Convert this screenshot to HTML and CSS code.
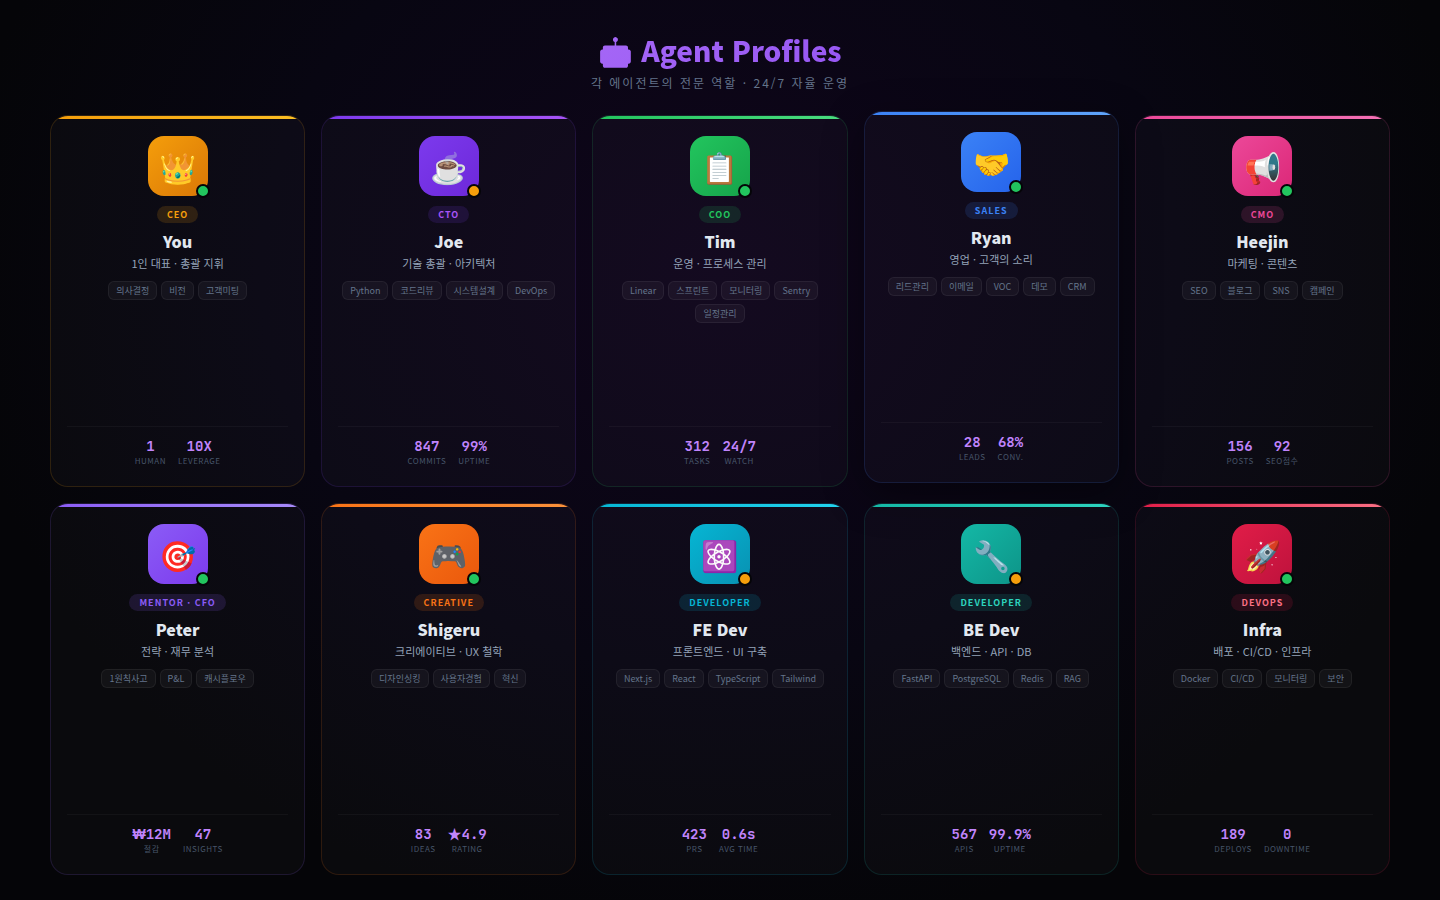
FILE: index.html
```
<!DOCTYPE html>
<html lang="ko">
<head>
    <meta charset="UTF-8">
    <meta name="viewport" content="width=device-width, initial-scale=1.0">
    <title>Agent Profiles</title>
    <link rel="stylesheet" href="styles.css">
</head>
<body>
    <header class="header">
        <h1>🤖 Agent Profiles</h1>
        <p>각 에이전트의 전문 역할 · 24/7 자율 운영</p>
    </header>

    <main class="grid">
        <article class="card ceo">
            <div class="avatar">👑<span class="status online"></span></div>
            <span class="badge">CEO</span>
            <h2 class="name">You</h2>
            <p class="role">1인 대표 · 총괄 지휘</p>
            <div class="tags"><span>의사결정</span><span>비전</span><span>고객미팅</span></div>
            <div class="stats">
                <div class="stat"><b>1</b><small>Human</small></div>
                <div class="stat"><b>10X</b><small>Leverage</small></div>
            </div>
        </article>

        <article class="card cto">
            <div class="avatar">☕<span class="status busy"></span></div>
            <span class="badge">CTO</span>
            <h2 class="name">Joe</h2>
            <p class="role">기술 총괄 · 아키텍처</p>
            <div class="tags"><span>Python</span><span>코드리뷰</span><span>시스템설계</span><span>DevOps</span></div>
            <div class="stats">
                <div class="stat"><b>847</b><small>Commits</small></div>
                <div class="stat"><b>99%</b><small>Uptime</small></div>
            </div>
        </article>

        <article class="card coo">
            <div class="avatar">📋<span class="status online"></span></div>
            <span class="badge">COO</span>
            <h2 class="name">Tim</h2>
            <p class="role">운영 · 프로세스 관리</p>
            <div class="tags"><span>Linear</span><span>스프린트</span><span>모니터링</span><span>Sentry</span><span>일정관리</span></div>
            <div class="stats">
                <div class="stat"><b>312</b><small>Tasks</small></div>
                <div class="stat"><b>24/7</b><small>Watch</small></div>
            </div>
        </article>

        <article class="card sales raised">
            <div class="avatar">🤝<span class="status online"></span></div>
            <span class="badge">SALES</span>
            <h2 class="name">Ryan</h2>
            <p class="role">영업 · 고객의 소리</p>
            <div class="tags"><span>리드관리</span><span>이메일</span><span>VOC</span><span>데모</span><span>CRM</span></div>
            <div class="stats">
                <div class="stat"><b>28</b><small>Leads</small></div>
                <div class="stat"><b>68%</b><small>Conv.</small></div>
            </div>
        </article>

        <article class="card cmo">
            <div class="avatar">📢<span class="status online"></span></div>
            <span class="badge">CMO</span>
            <h2 class="name">Heejin</h2>
            <p class="role">마케팅 · 콘텐츠</p>
            <div class="tags"><span>SEO</span><span>블로그</span><span>SNS</span><span>캠페인</span></div>
            <div class="stats">
                <div class="stat"><b>156</b><small>Posts</small></div>
                <div class="stat"><b>92</b><small>SEO점수</small></div>
            </div>
        </article>

        <article class="card mentor">
            <div class="avatar">🎯<span class="status online"></span></div>
            <span class="badge">MENTOR · CFO</span>
            <h2 class="name">Peter</h2>
            <p class="role">전략 · 재무 분석</p>
            <div class="tags"><span>1원칙사고</span><span>P&amp;L</span><span>캐시플로우</span></div>
            <div class="stats">
                <div class="stat"><b><span class="won">₩</span>12M</b><small>절감</small></div>
                <div class="stat"><b>47</b><small>Insights</small></div>
            </div>
        </article>

        <article class="card creative">
            <div class="avatar">🎮<span class="status online"></span></div>
            <span class="badge">CREATIVE</span>
            <h2 class="name">Shigeru</h2>
            <p class="role">크리에이티브 · UX 철학</p>
            <div class="tags"><span>디자인싱킹</span><span>사용자경험</span><span>혁신</span></div>
            <div class="stats">
                <div class="stat"><b>83</b><small>Ideas</small></div>
                <div class="stat"><b>★4.9</b><small>Rating</small></div>
            </div>
        </article>

        <article class="card frontend">
            <div class="avatar">⚛️<span class="status busy"></span></div>
            <span class="badge">DEVELOPER</span>
            <h2 class="name">FE Dev</h2>
            <p class="role">프론트엔드 · UI 구축</p>
            <div class="tags"><span>Next.js</span><span>React</span><span>TypeScript</span><span>Tailwind</span></div>
            <div class="stats">
                <div class="stat"><b>423</b><small>PRs</small></div>
                <div class="stat"><b>0.6s</b><small>Avg Time</small></div>
            </div>
        </article>

        <article class="card backend">
            <div class="avatar">🔧<span class="status busy"></span></div>
            <span class="badge">DEVELOPER</span>
            <h2 class="name">BE Dev</h2>
            <p class="role">백엔드 · API · DB</p>
            <div class="tags"><span>FastAPI</span><span>PostgreSQL</span><span>Redis</span><span>RAG</span></div>
            <div class="stats">
                <div class="stat"><b>567</b><small>APIs</small></div>
                <div class="stat"><b>99.9%</b><small>Uptime</small></div>
            </div>
        </article>

        <article class="card devops">
            <div class="avatar">🚀<span class="status online"></span></div>
            <span class="badge">DEVOPS</span>
            <h2 class="name">Infra</h2>
            <p class="role">배포 · CI/CD · 인프라</p>
            <div class="tags"><span>Docker</span><span>CI/CD</span><span>모니터링</span><span>보안</span></div>
            <div class="stats">
                <div class="stat"><b>189</b><small>Deploys</small></div>
                <div class="stat"><b>0</b><small>Downtime</small></div>
            </div>
        </article>
    </main>
</body>
</html>
```
FILE: styles.css
```
* {
    margin: 0;
    padding: 0;
    box-sizing: border-box;
}
body {
    font-family: 'Noto Sans CJK KR', sans-serif;
    background: radial-gradient(ellipse at 50% 30%, #0f051b 0%, #080612 45%, #050508 75%);
    background-color: #050508;
    color: #e2e8f0;
    min-height: 100vh;
    padding: 30px 50px 25px;
    display: flex;
    flex-direction: column;
}

/* Header */
.header {
    text-align: center;
    margin-bottom: 24px;
}
.header h1 {
    font-size: 28px;
    font-weight: 800;
    background: linear-gradient(135deg, #c084fc, #7c3aed);
    -webkit-background-clip: text;
    background-clip: text;
    color: transparent;
}
.header p {
    font-size: 12px;
    color: #64748b;
    letter-spacing: 2px;
    margin-top: 4px;
}

/* Cards */
.grid {
    flex: 1;
    display: grid;
    grid-template-columns: repeat(5, 1fr);
    grid-auto-rows: 1fr;
    gap: 16px;
}
.card {
    position: relative;
    display: flex;
    flex-direction: column;
    align-items: center;
    padding: 20px 16px;
    text-align: center;
    background: rgba(255, 255, 255, 0.025);
    border: 1px solid var(--line);
    border-radius: 18px;
    overflow: hidden;
}
.card::before {
    content: '';
    position: absolute;
    top: 0;
    left: 0;
    right: 0;
    height: 3px;
    background: linear-gradient(90deg, var(--from), var(--to));
}
.card.raised {
    transform: translateY(-4px);
    box-shadow: 0 12px 40px rgba(0, 0, 0, 0.4);
}
.avatar {
    position: relative;
    width: 60px;
    height: 60px;
    display: flex;
    align-items: center;
    justify-content: center;
    font-size: 30px;
    border-radius: 16px;
    background: linear-gradient(135deg, var(--from), var(--deep));
    margin-bottom: 10px;
}
.status {
    position: absolute;
    right: -2px;
    bottom: -2px;
    width: 14px;
    height: 14px;
    border: 2px solid #050508;
    border-radius: 50%;
}
.status.online { background: #22c55e; }
.status.busy { background: #f59e0b; }
.badge {
    font-size: 9px;
    font-weight: 700;
    letter-spacing: 1px;
    padding: 2px 10px;
    border-radius: 10px;
    color: var(--text);
    background: var(--soft);
    margin-bottom: 6px;
}
.name {
    font-size: 16px;
    font-weight: 800;
    margin-bottom: 2px;
}
.role {
    font-size: 11px;
    color: #94a3b8;
    margin-bottom: 10px;
}
.tags {
    display: flex;
    flex-wrap: wrap;
    justify-content: center;
    gap: 4px;
}
.tags span {
    font-size: 9px;
    color: #64748b;
    padding: 2px 7px;
    border: 1px solid rgba(255, 255, 255, 0.06);
    border-radius: 6px;
    background: rgba(255, 255, 255, 0.04);
}

/* Bottom stats */
.stats {
    display: flex;
    justify-content: center;
    gap: 12px;
    width: 100%;
    margin-top: auto;
    padding-top: 10px;
    border-top: 1px solid rgba(255, 255, 255, 0.04);
}
.stat b {
    display: block;
    font-family: 'JetBrains Mono', 'Noto Sans CJK KR', monospace;
    font-size: 14px;
    line-height: 18px;
    font-weight: 700;
    color: #c084fc;
}
.stat .won {
    font-family: 'Liberation Sans', sans-serif;
    line-height: 1;
}
.stat small {
    display: block;
    font-size: 8px;
    color: #475569;
    letter-spacing: 0.5px;
    text-transform: uppercase;
}

/* Card colours */
.ceo { --from: #f59e0b; --to: #fbbf24; --deep: #d97706; --text: #f59e0b; --soft: rgba(245, 158, 11, 0.15); --line: rgba(245, 158, 11, 0.15); }
.cto { --from: #7c3aed; --to: #a855f7; --deep: #6d28d9; --text: #a855f7; --soft: rgba(124, 58, 237, 0.15); --line: rgba(124, 58, 237, 0.15); }
.coo { --from: #22c55e; --to: #4ade80; --deep: #16a34a; --text: #22c55e; --soft: rgba(34, 197, 94, 0.15); --line: rgba(34, 197, 94, 0.15); }
.sales { --from: #3b82f6; --to: #60a5fa; --deep: #2563eb; --text: #3b82f6; --soft: rgba(59, 130, 246, 0.15); --line: rgba(59, 130, 246, 0.15); }
.cmo { --from: #ec4899; --to: #f472b6; --deep: #db2777; --text: #ec4899; --soft: rgba(236, 72, 153, 0.15); --line: rgba(236, 72, 153, 0.15); }
.mentor { --from: #8b5cf6; --to: #a78bfa; --deep: #7c3aed; --text: #8b5cf6; --soft: rgba(139, 92, 246, 0.15); --line: rgba(139, 92, 246, 0.15); }
.creative { --from: #f97316; --to: #fb923c; --deep: #ea580c; --text: #f97316; --soft: rgba(249, 115, 22, 0.15); --line: rgba(249, 115, 22, 0.15); }
.frontend { --from: #06b6d4; --to: #22d3ee; --deep: #0891b2; --text: #06b6d4; --soft: rgba(6, 182, 212, 0.15); --line: rgba(6, 182, 212, 0.15); }
.backend { --from: #14b8a6; --to: #2dd4bf; --deep: #0d9488; --text: #2dd4bf; --soft: rgba(20, 184, 166, 0.15); --line: rgba(20, 184, 166, 0.15); }
.devops { --from: #e11d48; --to: #fb7185; --deep: #be123c; --text: #fb7185; --soft: rgba(225, 29, 72, 0.15); --line: rgba(225, 29, 72, 0.15); }
```
